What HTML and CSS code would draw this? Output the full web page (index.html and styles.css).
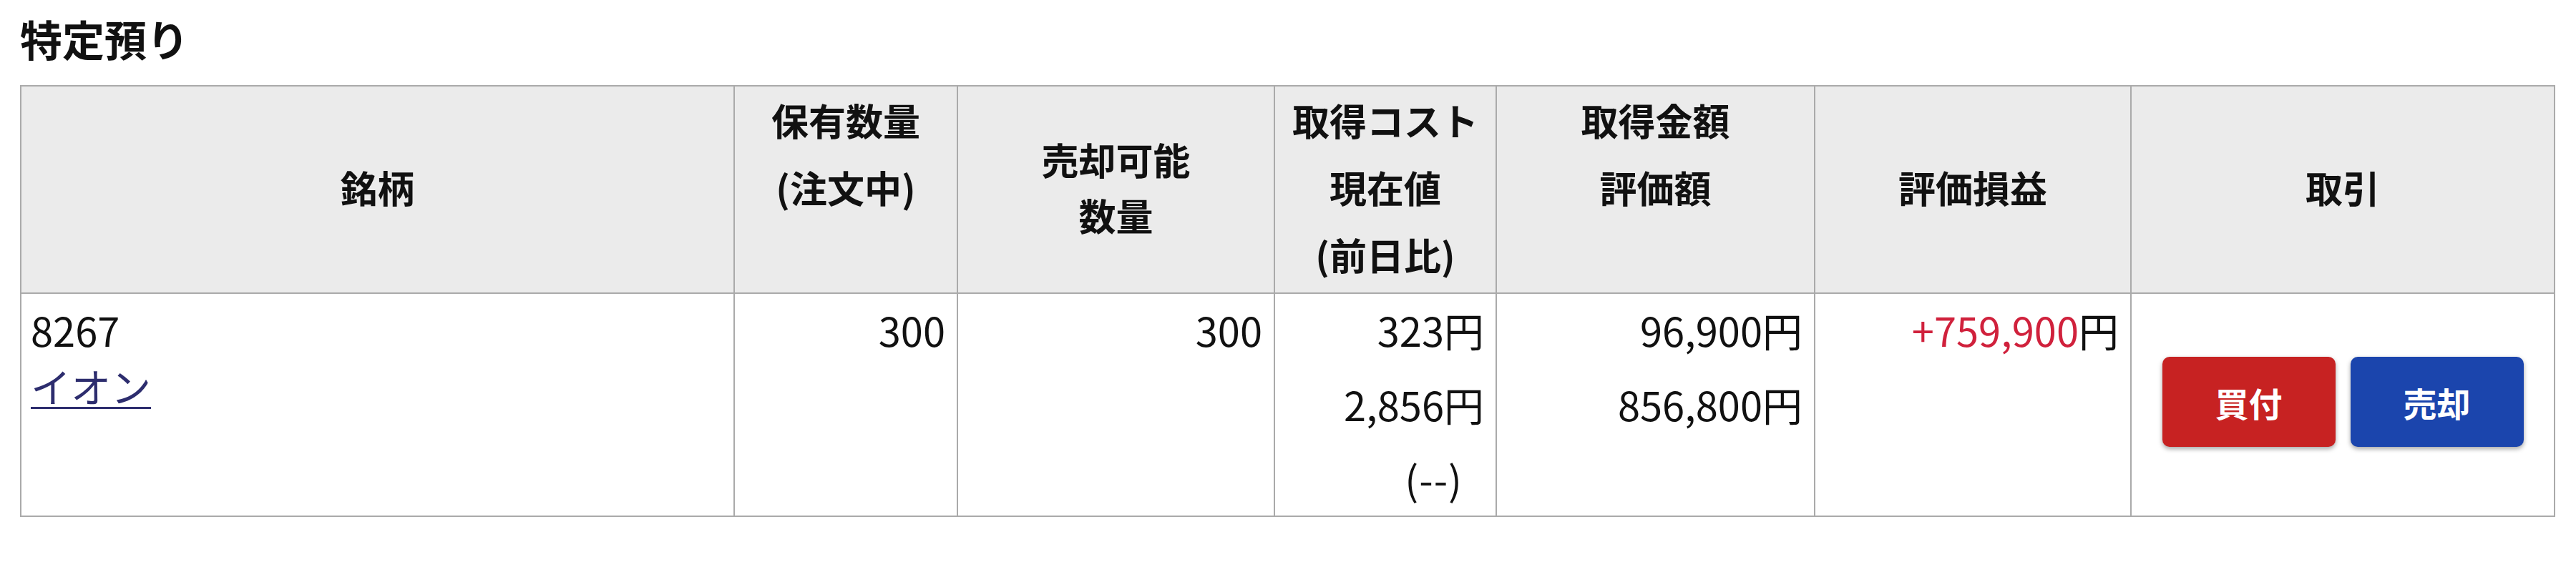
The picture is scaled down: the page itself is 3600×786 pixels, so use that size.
FILE: index.html
```html
<!DOCTYPE html>
<html lang="ja">
<head>
<meta charset="utf-8">
<title>特定預り</title>
<link rel="stylesheet" href="styles.css">
</head>
<body>
<div class="page">
  <h2 class="title">特定預り</h2>
  <table class="holdings">
    <colgroup>
      <col class="c-name">
      <col class="c-qty">
      <col class="c-sell">
      <col class="c-cost">
      <col class="c-amt">
      <col class="c-pl">
      <col class="c-trade">
    </colgroup>
    <thead>
      <tr>
        <th>銘柄</th>
        <th class="stack"><div class="hl">保有数量</div><div class="hl">(注文中)</div><div class="hl">&nbsp;</div></th>
        <th>売却可能<br>数量</th>
        <th class="stack"><div class="hl">取得コスト</div><div class="hl">現在値</div><div class="hl">(前日比)</div></th>
        <th class="stack"><div class="hl">取得金額</div><div class="hl">評価額</div><div class="hl">&nbsp;</div></th>
        <th>評価損益</th>
        <th>取引</th>
      </tr>
    </thead>
    <tbody>
      <tr>
        <td class="name">8267<br><a href="#" class="stock-link">イオン</a></td>
        <td class="num"><div class="v">300</div></td>
        <td class="num"><div class="v">300</div></td>
        <td class="num"><div class="v">323円</div><div class="v">2,856円</div><div class="v"><span class="ratio">(--)</span></div></td>
        <td class="num"><div class="v">96,900円</div><div class="v">856,800円</div></td>
        <td class="num"><div class="v"><span class="plus">+759,900</span>円</div></td>
        <td class="trade">
          <div class="btns">
            <button class="btn buy">買付</button>
            <button class="btn sell">売却</button>
          </div>
        </td>
      </tr>
    </tbody>
  </table>
</div>
</body>
</html>
```
FILE: styles.css
```css
html, body {
  margin: 0;
  padding: 0;
  background: #ffffff;
}
body {
  font-family: "Noto Sans CJK JP", "Noto Sans", sans-serif;
  color: #111;
}
.page {
  padding: 13px 31px 0 28px;
}
.title {
  margin: 0 0 25px 0;
  font-size: 59px;
  line-height: 81px;
  font-weight: 700;
  color: #111;
}
.holdings {
  width: 3541px;
  table-layout: fixed;
  border-collapse: collapse;
  border: 2px solid #aaaaaa;
}
.c-name { width: 997px; }
.c-qty { width: 312px; }
.c-sell { width: 443px; }
.c-cost { width: 310px; }
.c-amt { width: 445px; }
.c-pl { width: 442px; }
.c-trade { width: 592px; }

.holdings th {
  background: #ebebeb;
  border: 2px solid #aaaaaa;
  font-size: 52px;
  font-weight: 700;
  line-height: 78px;
  height: 279px;
  padding: 0 4px 6px 4px;
  text-align: center;
  vertical-align: middle;
  color: #111;
}
.holdings th .hl {
  padding: 8px 0;
}
.holdings td {
  border: 2px solid #aaaaaa;
  font-size: 56px;
  line-height: 78px;
  vertical-align: top;
  padding: 11px 16px 13px 13px;
  color: #111;
}
.holdings td.num {
  text-align: right;
}
.holdings td .v {
  margin-bottom: 26px;
}
.holdings td .v:last-child {
  margin-bottom: 0;
}
.ratio {
  display: inline-block;
  margin-right: 30px;
  letter-spacing: 1px;
}
.stock-link {
  color: #2d2d6e;
  text-decoration: underline;
  text-decoration-thickness: 3px;
  text-underline-offset: 6px;
}
.plus {
  color: #d0213c;
}
.holdings td.trade {
  vertical-align: middle;
  padding: 0 0 8px 0;
}
.btns {
  display: flex;
  justify-content: center;
  gap: 21px;
}
.btn {
  width: 242px;
  height: 126px;
  border: none;
  border-radius: 10px;
  font-family: "Noto Sans CJK JP", "Noto Sans", sans-serif;
  font-size: 47px;
  font-weight: 700;
  color: #ffffff;
  box-shadow: 0 3px 6px rgba(0, 0, 0, 0.35);
  cursor: pointer;
}
.btn.buy {
  background: #c72222;
}
.btn.sell {
  background: #1b45ad;
}
```
